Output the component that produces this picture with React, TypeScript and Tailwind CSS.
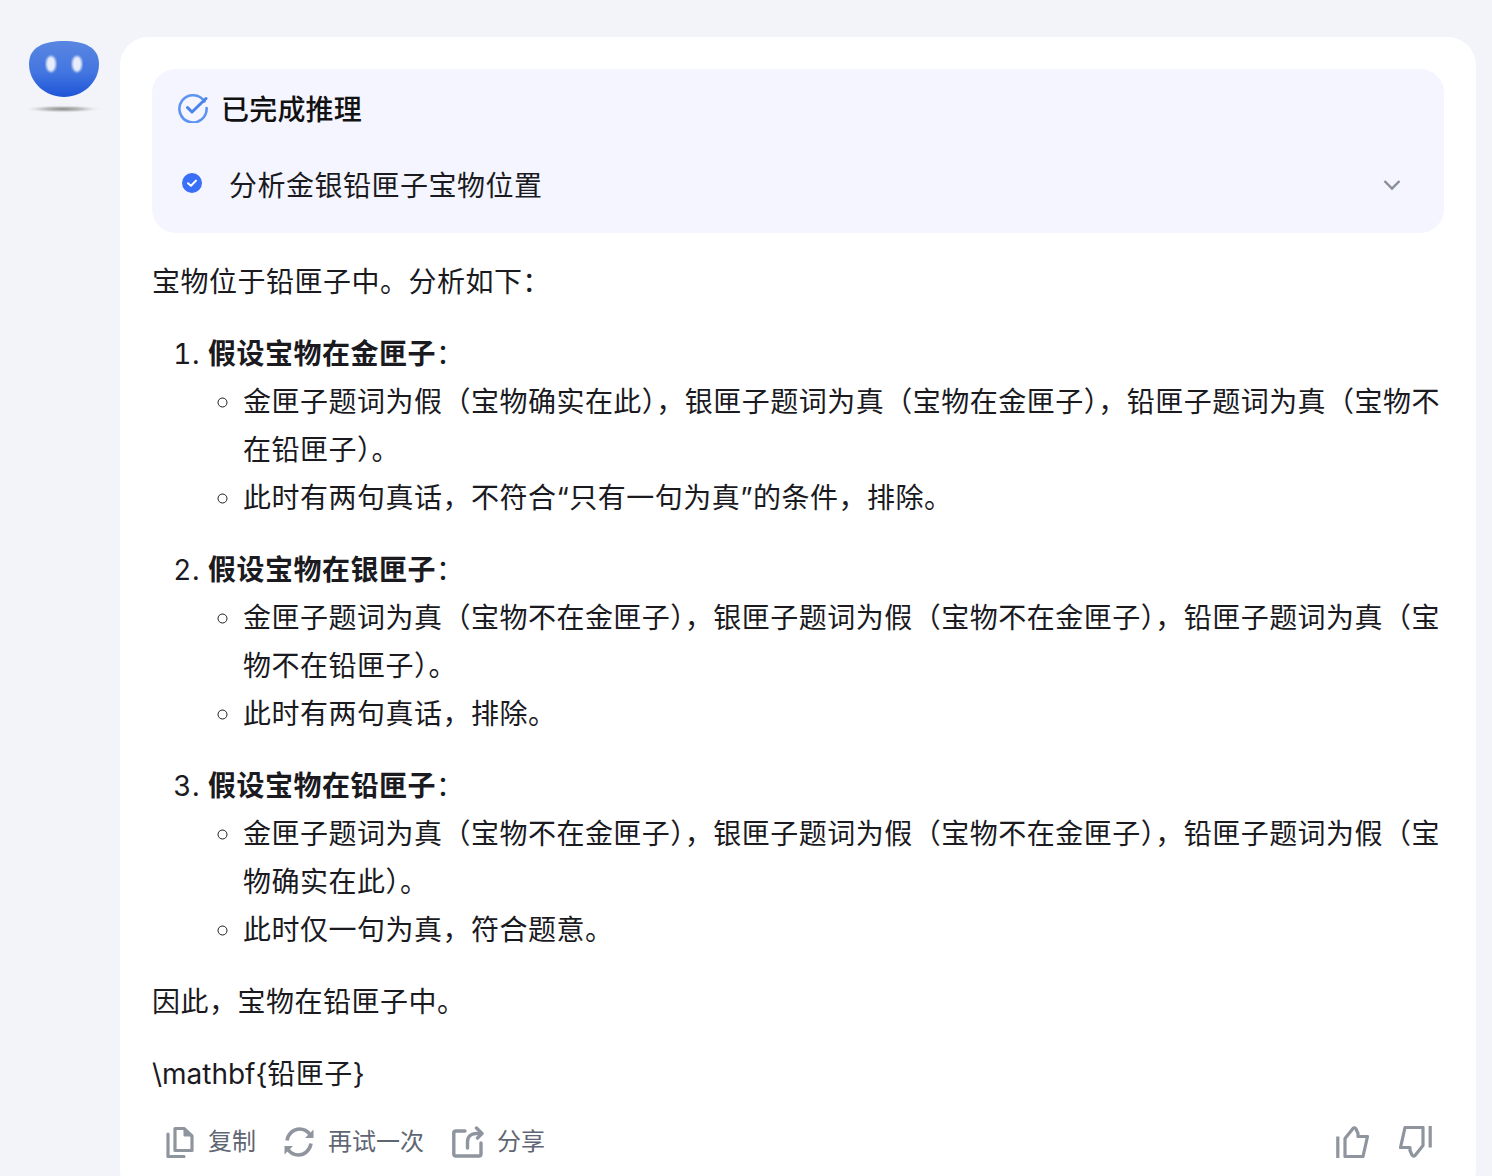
const FONT = "font-['Inter','Noto_Sans_CJK_SC',sans-serif]";

function Mascot() {
  return (
    <svg width="80" height="76" viewBox="0 0 80 76" className="block">
      <defs>
        <linearGradient id="body" x1="0" y1="0" x2="0" y2="1">
          <stop offset="0" stopColor="#5a86e2" />
          <stop offset="0.55" stopColor="#4376e0" />
          <stop offset="1" stopColor="#1f54d8" />
        </linearGradient>
        <radialGradient id="shade">
          <stop offset="0" stopColor="#8a8a8a" />
          <stop offset="0.5" stopColor="#c4c4c6" />
          <stop offset="1" stopColor="#f3f4f9" stopOpacity="0" />
        </radialGradient>
        <filter id="soft"><feGaussianBlur stdDeviation="0.8" /></filter>
      </defs>
      <path d="M35 1C55 1 70 7 70 24C70 43 53 57 35 57C17 57 0 43 0 24C0 7 15 1 35 1Z" fill="url(#body)" />
      <ellipse cx="22" cy="24" rx="5" ry="8" fill="#e9edfb" filter="url(#soft)" />
      <ellipse cx="48" cy="24" rx="5" ry="8" fill="#e9edfb" filter="url(#soft)" />
      <ellipse cx="34" cy="69" rx="40" ry="4" fill="url(#shade)" />
    </svg>
  );
}

function Circle() {
  return (
    <svg width="30" height="30" viewBox="0 0 30 30" fill="none">
      <path d="M26.5 8.5A13.6 13.6 0 1 0 28.6 15" stroke="#5d93f3" strokeWidth="2.6" strokeLinecap="round" />
      <path d="M9.5 14.5L14 19L28 5.5" stroke="#4a83ee" strokeWidth="3" strokeLinecap="round" strokeLinejoin="round" />
    </svg>
  );
}

function SmallCheck() {
  return (
    <svg width="20" height="20" viewBox="0 0 20 20" fill="none">
      <circle cx="10" cy="10" r="10" fill="#3a6ff7" />
      <path d="M6 10.2L9 12.8L14 7.6" stroke="#fff" strokeWidth="2" strokeLinecap="round" strokeLinejoin="round" />
    </svg>
  );
}

function Copy() {
  return (
    <svg width="28" height="32" viewBox="0 0 28 32" fill="none" stroke="#8f959e" strokeWidth="3.2" strokeLinejoin="round">
      <path d="M9 2.5H18L26 10V24.5H9Z" />
      <path d="M18 2.5V10H26" fill="#8f959e" strokeWidth="1" />
      <path d="M2 8V30.5H18" strokeLinecap="round" />
    </svg>
  );
}

function Retry() {
  return (
    <svg width="30" height="30" viewBox="0 0 30 30" fill="none" stroke="#8f959e" strokeWidth="3.6">
      <path d="M3 13.5C4.2 6.5 9.5 2 15.5 2C20 2 23.5 4 26 7.5" />
      <path d="M27 16.5C25.8 23.5 20.5 28 14.5 28C10 28 6.5 26 4 22.5" />
      <path d="M29.5 2.5V11H21Z" fill="#8f959e" stroke="none" />
      <path d="M0.5 27.5V19H9Z" fill="#8f959e" stroke="none" />
    </svg>
  );
}

function Share() {
  return (
    <svg width="32" height="32" viewBox="0 0 32 32" fill="none" stroke="#8f959e" strokeWidth="3.4" strokeLinecap="round" strokeLinejoin="round">
      <path d="M13 5H4C2.6 5 1.8 5.8 1.8 7V28C1.8 29.2 2.6 30 4 30H27C28.2 30 29 29.2 29 28V17" />
      <path d="M15.5 22V16C15.5 10.5 19 7.5 24 7.5H29" />
      <path d="M24.5 2L30 7.5L25.5 12" />
    </svg>
  );
}

function ThumbUp() {
  return (
    <svg width="33" height="32" viewBox="0 0 33 32" fill="none" stroke="#8f959e" strokeWidth="3.2" strokeLinejoin="round">
      <path d="M1.8 10.5V32" />
      <path d="M9 30.5V12.5L17 2.5C18 1.5 19.5 1.8 20 3L22 7.5V10.5H31.5L27 30.5Z" />
    </svg>
  );
}

function ThumbDown() {
  return (
    <svg width="33" height="32" viewBox="0 0 33 32" fill="none" stroke="#8f959e" strokeWidth="3.2" strokeLinejoin="round">
      <path d="M31.2 0V21.5" />
      <path d="M24 1.5V19.5L16 29.5C15 30.5 13.5 30.2 13 29L11 24.5V21.5H1.5L6 1.5Z" />
    </svg>
  );
}

function Action({ icon, label, gap }: { icon: React.ReactNode; label: string; gap: string }) {
  return (
    <div className={`flex items-center ${gap}`}>
      {icon}
      <span className="text-[24px] leading-[32px] tracking-normal text-[#5f6673]">{label}</span>
    </div>
  );
}

const sections = [
  {
    title: "假设宝物在金匣子",
    items: [
      "金匣子题词为假（宝物确实在此），银匣子题词为真（宝物在金匣子），铅匣子题词为真（宝物不在铅匣子）。",
      "此时有两句真话，不符合“只有一句为真”的条件，排除。",
    ],
  },
  {
    title: "假设宝物在银匣子",
    items: [
      "金匣子题词为真（宝物不在金匣子），银匣子题词为假（宝物不在金匣子），铅匣子题词为真（宝物不在铅匣子）。",
      "此时有两句真话，排除。",
    ],
  },
  {
    title: "假设宝物在铅匣子",
    items: [
      "金匣子题词为真（宝物不在金匣子），银匣子题词为假（宝物不在金匣子），铅匣子题词为假（宝物确实在此）。",
      "此时仅一句为真，符合题意。",
    ],
  },
];

export default function App() {
  return (
    <div className={`${FONT} flex h-[1176px] w-[1492px] items-start overflow-hidden bg-[#f3f4f9] pt-[37px] pl-[29px] text-[#1a1a1f]`}>
      <div className="mt-[3px] w-[91px] shrink-0">
        <Mascot />
      </div>
      <div className="w-[1356px] shrink-0 rounded-[28px] bg-white px-[32px] pt-[32px] pb-[40px] text-[28px] leading-[48px] tracking-[0.49px]">
        <div className="h-[164px] rounded-[24px] bg-[#f4f5fe] pt-[17px] pr-[43px] pl-[26px]">
          <div className="flex h-[48px] items-center gap-[13px]">
            <span className="mb-[4px] block">
              <Circle />
            </span>
            <span className="font-medium tracking-[0.2px] text-[#111]">已完成推理</span>
          </div>
          <div className="mt-[28px] flex h-[48px] items-center pl-[4px]">
            <span className="mb-[6px] block">
              <SmallCheck />
            </span>
            <span className="ml-[27px] flex-1">分析金银铅匣子宝物位置</span>
            <svg className="mb-[2px]" width="18" height="12" viewBox="0 0 18 12" fill="none" stroke="#878d99" strokeWidth="2.4">
              <path d="M1.5 2L9 9.5L16.5 2" />
            </svg>
          </div>
        </div>
        <p className="mt-[25px]">宝物位于铅匣子中。分析如下：</p>
        <ol className="mt-[24px] list-decimal pl-[56px]">
          {sections.map((s) => (
            <li key={s.title} className="mb-[24px]">
              <strong className="font-semibold">{s.title}</strong>：
              <ul className="list-[circle] pl-[35px]">
                {s.items.map((t) => (
                  <li key={t}>{t}</li>
                ))}
              </ul>
            </li>
          ))}
        </ol>
        <p>因此，宝物在铅匣子中。</p>
        <p className="mt-[24px]">
          <span className="tracking-[-0.02px]">\mathbf{"{"}</span>铅匣子{"}"}
        </p>
        <div className="mt-[28px] flex items-center justify-between pr-[12px] pl-[14px]">
          <div className="flex items-center gap-[28px]">
            <Action icon={<Copy />} label="复制" gap="gap-[14px]" />
            <Action icon={<Retry />} label="再试一次" gap="gap-[14px]" />
            <Action icon={<Share />} label="分享" gap="gap-[13px]" />
          </div>
          <div className="flex items-center gap-[30px]">
            <ThumbUp />
            <ThumbDown />
          </div>
        </div>
      </div>
    </div>
  );
}
